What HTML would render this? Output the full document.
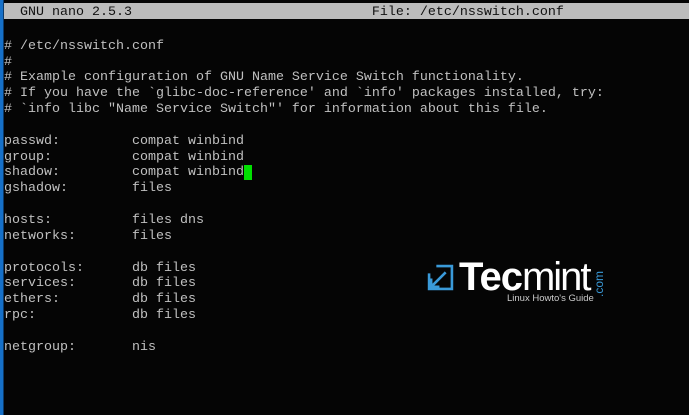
<!DOCTYPE html>
<html><head><style>
html,body{margin:0;padding:0;background:#050505;width:689px;height:415px;overflow:hidden}
.lb{position:absolute;left:0;top:0;width:3px;height:415px;background:#1670c8}
.lb2{position:absolute;left:3px;top:0;width:1px;height:415px;background:#0b3a6a}
.tb{position:absolute;left:4px;top:3px;width:685px;height:16px;background:#bcbcbc}
pre{position:absolute;left:4px;top:7px;margin:0;font-family:"Liberation Mono",monospace;font-size:13.33px;line-height:15.85px;color:#c0c0c0;white-space:pre}
.t{color:#111;position:relative;top:-2px}
.cur{background:#00e000;color:#000}
.logo{position:absolute;left:427px;top:261px;font-family:"Liberation Sans",sans-serif;color:#fff}
</style></head><body>
<div class="lb"></div><div class="lb2"></div>
<div class="tb"></div>
<pre><span class="t">  GNU nano 2.5.3                              File: /etc/nsswitch.conf</span>

# /etc/nsswitch.conf
#
# Example configuration of GNU Name Service Switch functionality.
# If you have the `glibc-doc-reference' and `info' packages installed, try:
# `info libc "Name Service Switch"' for information about this file.

passwd:         compat winbind
group:          compat winbind
shadow:         compat winbind<span class="cur"> </span>
gshadow:        files

hosts:          files dns
networks:       files

protocols:      db files
services:       db files
ethers:         db files
rpc:            db files

netgroup:       nis
</pre>
<div class="logo">
<svg width="27" height="27" style="position:absolute;left:0;top:3px" viewBox="0 0 26 26"><path d="M9 2H24V24H2V9" fill="none" stroke="#3a9ad9" stroke-width="2.5"/><path d="M18 8L4 22M4 14V22H12" fill="none" stroke="#3a9ad9" stroke-width="2.5"/></svg>
<div style="position:absolute;left:32px;top:-6px;font-size:40px;font-weight:bold;letter-spacing:-1px;white-space:nowrap">Tec<span style="font-weight:normal;letter-spacing:-2px">mint</span></div>
<div style="position:absolute;left:165px;top:36px;font-size:12px;color:#3a9ad9;transform:rotate(-90deg);transform-origin:left top;white-space:nowrap">.com</div>
<div style="position:absolute;left:80px;top:32px;font-size:9.5px;color:#ccc;white-space:nowrap">Linux Howto's Guide</div>
</div>
</body></html>
